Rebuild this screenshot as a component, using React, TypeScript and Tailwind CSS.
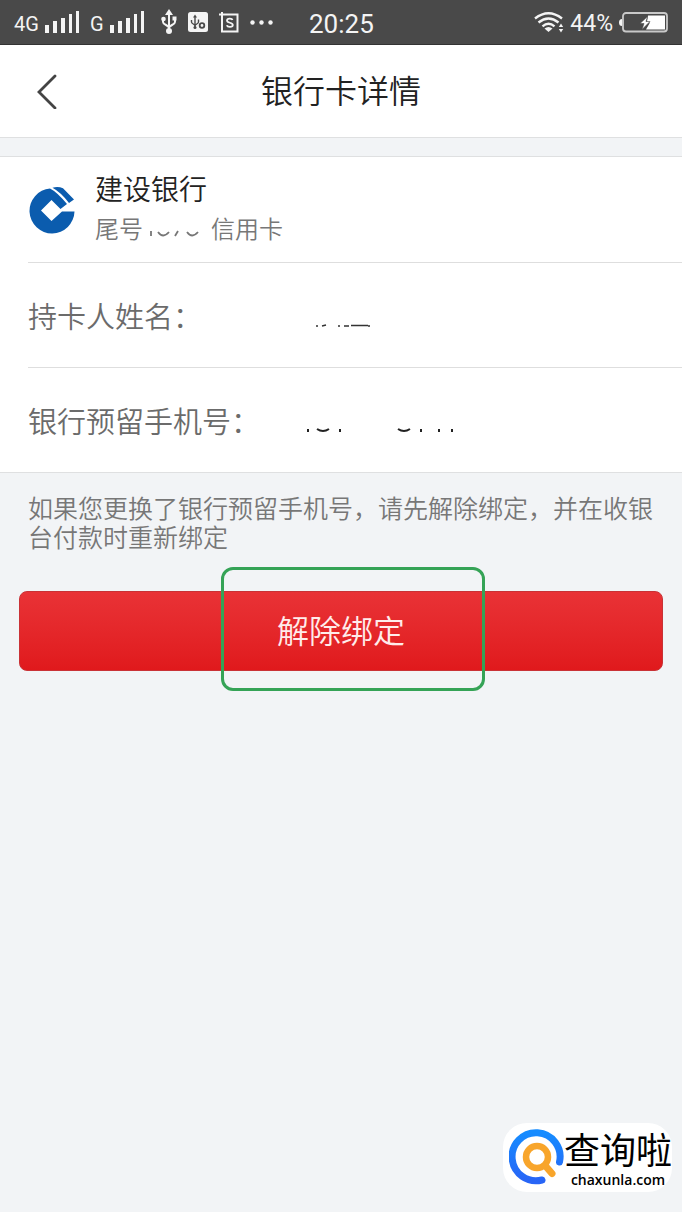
import type { ReactNode } from "react";

function SignalBars() {
  return (
    <svg width="35" height="22" viewBox="0 0 35 22" fill="#f4f4f4" aria-hidden="true">
      <rect x="0" y="14" width="4" height="8" />
      <rect x="8" y="10" width="4" height="12" />
      <rect x="16" y="7" width="4" height="15" />
      <rect x="24" y="3" width="3" height="19" />
      <rect x="31" y="0" width="3" height="22" />
    </svg>
  );
}

function UsbIcon() {
  return (
    <svg width="16" height="26" viewBox="0 0 16 26" fill="none" stroke="#f4f4f4" strokeWidth="2" aria-hidden="true">
      <path d="M8 4v18M2 10v3c0 3 6 3 6 6M14 9v4c0 3-6 3-6 6" />
      <path d="M8 0l4 6H4z" fill="#f4f4f4" stroke="none" />
      <circle cx="8" cy="22" r="3" fill="#f4f4f4" stroke="none" />
      <circle cx="2.500" cy="10" r="2.300" fill="#f4f4f4" stroke="none" />
      <path d="M11.500 7.500h4v4h-4z" fill="#f4f4f4" stroke="none" />
    </svg>
  );
}

function DebugIcon() {
  return (
    <svg width="20" height="20" viewBox="0 0 20 20" fill="none" stroke="#494949" strokeWidth="1.400" aria-hidden="true">
      <rect width="20" height="20" rx="2.500" fill="#f4f4f4" stroke="none" />
      <path d="M7 4v12M3.500 8v2c0 2 3.500 2 3.500 4M10.500 7.500v2.500c0 2-3.500 2-3.500 4" />
      <path d="M7 2.500l2 3H5z" fill="#494949" stroke="none" />
      <circle cx="7" cy="15.500" r="1.500" fill="#494949" stroke="none" />
      <circle cx="14" cy="13.500" r="2.300" strokeWidth="1.800" />
    </svg>
  );
}

function ScreenIcon() {
  return (
    <svg width="20" height="21" viewBox="0 0 20 21" fill="none" stroke="#f4f4f4" strokeWidth="2" aria-hidden="true">
      <path d="M0 2.500h18.500v17H3V0" />
      <path d="M13.500 8c-.5-2-5.500-2-5.500.5 0 3 5.800 1.500 5.800 4.500 0 2.500-5.300 2.600-6 .2" strokeWidth="1.800" />
    </svg>
  );
}

function MoreDots() {
  return (
    <svg width="23" height="5" viewBox="0 0 23 5" fill="#f4f4f4" aria-hidden="true">
      <circle cx="2.500" cy="2.500" r="2.200" />
      <circle cx="11.500" cy="2.500" r="2.200" />
      <circle cx="20.500" cy="2.500" r="2.200" />
    </svg>
  );
}

function WifiIcon() {
  return (
    <svg width="30" height="21" viewBox="0 0 30 21" fill="none" stroke="#f4f4f4" strokeWidth="2.400" aria-hidden="true">
      <path d="M1 6.500Q14.500-4 28 6.500M4.500 10.500q10-8 20 0M8.500 14.300q6-5 12 0" />
      <path d="M14.500 20l-4-3.500q4-3 8 0z" fill="#f4f4f4" stroke="none" />
      <path d="M27 11.500l2.200 3.500h-4.400zM27 20.500l-2.200-3.500h4.400z" fill="#f4f4f4" stroke="none" />
    </svg>
  );
}

function BatteryIcon() {
  return (
    <svg width="49" height="21" viewBox="0 0 49 21" fill="none" aria-hidden="true">
      <path d="M3 7a3 3.500 0 0 0 0 7z" fill="#f4f4f4" />
      <rect x="4" y="1" width="44" height="18.500" rx="3" stroke="#c9c9c9" strokeWidth="1.800" />
      <path d="M29 3.500h17v14H27l4-7-3-1z" fill="#fff" />
      <path d="M28.500 4.500l-7.500 7h4l-2 6 8-8h-4z" fill="#fff" stroke="#494949" strokeWidth=".6" />
    </svg>
  );
}

function StatusBar() {
  return (
    <div className="flex h-[45px] items-center justify-between border-b border-[#333] bg-[#494949] px-[14px] font-['Roboto','Liberation_Sans',sans-serif] font-normal text-[#f4f4f4]">
      <div className="flex items-center">
        <span className="mt-1 w-[31px] text-[20px] leading-6">4G</span>
        <SignalBars />
        <span className="mt-1 ml-[10px] w-5 text-[20px] leading-6">G</span>
        <SignalBars />
        <div className="ml-4 flex items-center gap-[11px]">
          <UsbIcon />
          <DebugIcon />
          <ScreenIcon />
          <MoreDots />
        </div>
        <span className="mt-1 ml-9 text-[26px] leading-8">20:25</span>
      </div>
      <div className="flex items-center gap-[6px]">
        <WifiIcon />
        <span className="mt-1 text-[23px] leading-6">44%</span>
        <BatteryIcon />
      </div>
    </div>
  );
}

function BankLogo() {
  return (
    <svg width="46" height="48" viewBox="0 0 46 48" fill="#0b5cae" aria-hidden="true">
      <path d="M45.500 25.500A22.500 22.500 0 1 1 21 2.500Q28 6 38 18L31.500 23 22.500 14 12 24.500 22.500 35 33 25.500z" />
      <path d="M23.500 1.800Q29 .2 34 2.300L45 13.500 40 17Q32 6.500 23.500 1.800z" />
    </svg>
  );
}

function CardTail() {
  return (
    <svg width="58" height="24" viewBox="0 0 58 24" fill="none" stroke="#777" strokeWidth="1.800" aria-label="****">
      <path d="M8 15v5M15 16q5 7 11 0M35 15l-3 5M44 16q5 7 11 0" />
    </svg>
  );
}

function MaskedName() {
  return (
    <svg width="60" height="6" viewBox="0 0 60 6" fill="none" stroke="#333" strokeWidth="1.500" aria-label="***">
      <path d="M1 4h2M7 4l4-1M23 4h2M29 4h5M36 3.500h17M53 4h2" />
    </svg>
  );
}

function MaskedPhone() {
  return (
    <svg width="150" height="8" viewBox="0 0 150 8" fill="none" stroke="#222" strokeWidth="2" aria-label="***********">
      <path d="M3 3v3M12 3q6 4 12 0M35 3v3M93 3q6 4 12 0M116 3v3M134 3v3M147 3v3" />
    </svg>
  );
}

function DetailRow({ label, children }: { label: string; children: ReactNode }) {
  return (
    <div className="ml-7 flex h-[105px] items-center border-t border-[#dedede]">
      <dt className="w-[277px] shrink-0 text-[29px] leading-10 text-[#6b6b6b]">{label}</dt>
      <dd className="pt-5">{children}</dd>
    </div>
  );
}

function Watermark() {
  return (
    <div className="absolute right-[10px] bottom-5 flex h-[69px] items-center rounded-[24px] bg-white pl-[6px] text-black">
      <svg width="55" height="57" viewBox="0 0 55 57" fill="none" strokeLinecap="round" aria-hidden="true">
        <defs>
          <linearGradient id="ring" x1="0" y1="0" x2="0" y2="1">
            <stop stopColor="#168cff" />
            <stop offset="1" stopColor="#2865f6" />
          </linearGradient>
        </defs>
        <path d="M50.500 33A24 24 0 1 0 33 51" stroke="url(#ring)" strokeWidth="7" />
        <circle cx="28" cy="28" r="11" stroke="#f8a52b" strokeWidth="6.500" />
        <path d="M36.500 37L43 44.500" stroke="#f8a52b" strokeWidth="7" />
      </svg>
      <div className="flex flex-col items-center">
        <span className="font-['Noto_Sans_CJK_SC',sans-serif] text-[36px] leading-[44px] font-normal">查询啦</span>
        <span className="font-['Open_Sans','Noto_Sans',sans-serif] text-[14px] leading-5 font-semibold">chaxunla.com</span>
      </div>
    </div>
  );
}

export default function App() {
  return (
    <div className="relative min-h-screen bg-[#f2f4f6] font-['Noto_Sans_CJK_SC',sans-serif] font-[350]">
      <StatusBar />

      <header className="relative flex h-[93px] items-center justify-center border-b border-[#dfe0e1] bg-white">
        <button type="button" aria-label="返回" className="absolute left-[33px] p-1">
          <svg width="20" height="36" viewBox="0 0 20 36" fill="none" stroke="#444" strokeWidth="2.800" aria-hidden="true">
            <path d="M18 3L2 19l16 16" strokeLinecap="round" />
          </svg>
        </button>
        <h1 className="pb-1 text-[32px] leading-10 text-[#222]">银行卡详情</h1>
      </header>

      <main>
        <section className="mt-[18px] border-y border-[#dfe0e1] bg-white">
          <div className="flex h-[105px] items-center pl-[29px]">
            <BankLogo />
            <div className="ml-5 pb-1">
              <h2 className="text-[28px] leading-10 text-[#222]">建设银行</h2>
              <p className="flex items-center text-[24px] leading-10 text-[#777]">
                尾号
                <CardTail />
                <span className="ml-[10px]">信用卡</span>
              </p>
            </div>
          </div>
          <dl>
            <DetailRow label="持卡人姓名：">
              <span className="ml-[10px] block">
                <MaskedName />
              </span>
            </DetailRow>
            <DetailRow label="银行预留手机号：">
              <MaskedPhone />
            </DetailRow>
          </dl>
        </section>

        <p className="px-7 pt-5 text-[25px] leading-[29px] text-[#777]">
          如果您更换了银行预留手机号，请先解除绑定，并在收银台付款时重新绑定
        </p>

        <div className="relative mx-[19px] mt-10">
          <button
            type="button"
            className="h-20 w-full rounded-lg border border-[#c93236] bg-linear-to-b from-[#e93236] to-[#e0191c] pb-1 text-[32px] leading-10 text-[#ffeceb]"
          >
            解除绑定
          </button>
          <div className="pointer-events-none absolute -top-6 -bottom-5 left-[31.3%] w-[41%] rounded-xl border-3 border-[#35a356]" />
        </div>
      </main>

      <Watermark />
    </div>
  );
}
